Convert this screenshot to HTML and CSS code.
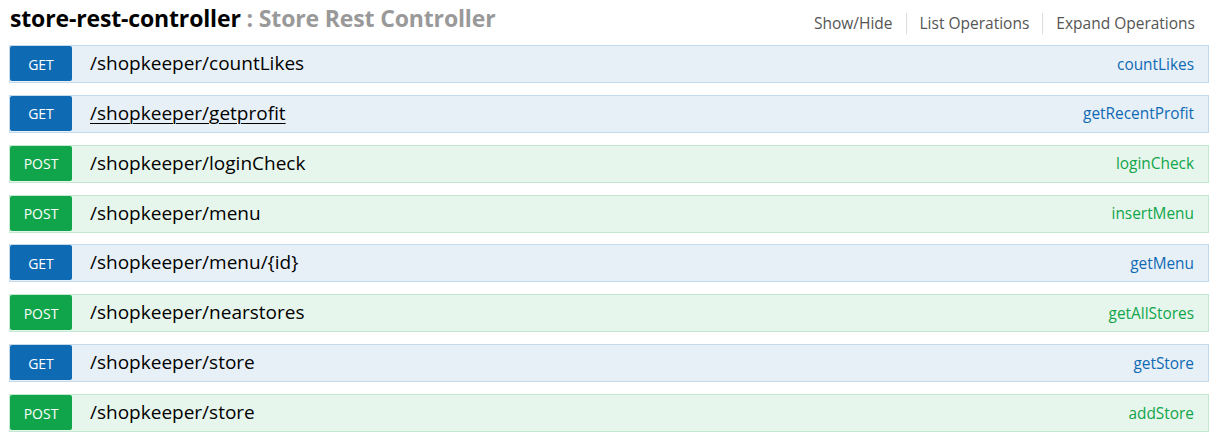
FILE: index.html
```html
<!DOCTYPE html>
<html>
<head>
<meta charset="utf-8">
<link rel="stylesheet" href="styles.css">
</head>
<body>
<div class="resource">
  <div class="heading">
    <h2 class="title"><span class="name">store-rest-controller</span> <span class="desc">: Store Rest Controller</span></h2>
    <ul class="options">
      <li>Show/Hide</li>
      <li>List Operations</li>
      <li>Expand Operations</li>
    </ul>
  </div>
  <ul class="ops">
    <li class="op get"><span class="method">GET</span><span class="path">/shopkeeper/countLikes</span><span class="nick">countLikes</span></li>
    <li class="op get"><span class="method">GET</span><span class="path hover">/shopkeeper/getprofit</span><span class="nick">getRecentProfit</span></li>
    <li class="op post"><span class="method">POST</span><span class="path">/shopkeeper/loginCheck</span><span class="nick">loginCheck</span></li>
    <li class="op post"><span class="method">POST</span><span class="path">/shopkeeper/menu</span><span class="nick">insertMenu</span></li>
    <li class="op get"><span class="method">GET</span><span class="path">/shopkeeper/menu/{id}</span><span class="nick">getMenu</span></li>
    <li class="op post"><span class="method">POST</span><span class="path">/shopkeeper/nearstores</span><span class="nick">getAllStores</span></li>
    <li class="op get"><span class="method">GET</span><span class="path">/shopkeeper/store</span><span class="nick">getStore</span></li>
    <li class="op post"><span class="method">POST</span><span class="path">/shopkeeper/store</span><span class="nick">addStore</span></li>
  </ul>
</div>
</body>
</html>
```
FILE: styles.css
```css
html, body {
  margin: 0;
  padding: 0;
  background: #fff;
  font-family: "Open Sans", "DejaVu Sans", sans-serif;
}
.resource {
  width: 1200px;
  margin-left: 9px;
}
.heading {
  display: flex;
  align-items: center;
  justify-content: space-between;
  height: 45px;
}
.title {
  margin: 0 0 0 1px;
  font-size: 23px;
  font-weight: 700;
  line-height: 1;
  position: relative;
  top: -4px;
  letter-spacing: -0.15px;
}
.title .name { color: #000; }
.title .desc { color: #999; }
.options {
  list-style: none;
  margin: 0;
  padding: 0;
  display: flex;
  position: relative;
  top: 1px;
}
.options li {
  font-size: 15.5px;
  color: #555;
  padding: 0 13px;
  line-height: 21px;
  border-right: 1px solid #ddd;
}
.options li:last-child {
  border-right: none;
  padding-right: 14px;
}
.ops {
  list-style: none;
  margin: 0;
  padding: 0;
}
.op {
  display: flex;
  align-items: center;
  height: 36px;
  border: 1px solid;
  margin-bottom: 11.86px;
}
.op.get {
  background: #e7f0f7;
  border-color: #c3d9ec;
}
.op.post {
  background: #e7f6ec;
  border-color: #c3e8d1;
}
.method {
  align-self: flex-start;
  width: 62px;
  height: 35px;
  border-radius: 2px;
  color: #fff;
  font-size: 14px;
  display: flex;
  align-items: center;
  justify-content: center;
  padding-top: 1px;
  box-sizing: border-box;
}
.get .method { background: #0f6ab4; }
.post .method { background: #10a54a; }
.path {
  margin-left: 18px;
  font-size: 19px;
  color: #000;
  position: relative;
  top: -1px;
}
.path.hover { text-decoration: underline; text-underline-offset: 3px; text-decoration-thickness: 1px; }
.nick {
  margin-left: auto;
  margin-right: 14px;
  font-size: 15.4px;
}
.get .nick { color: #0f6ab4; }
.post .nick { color: #10a54a; }
```
